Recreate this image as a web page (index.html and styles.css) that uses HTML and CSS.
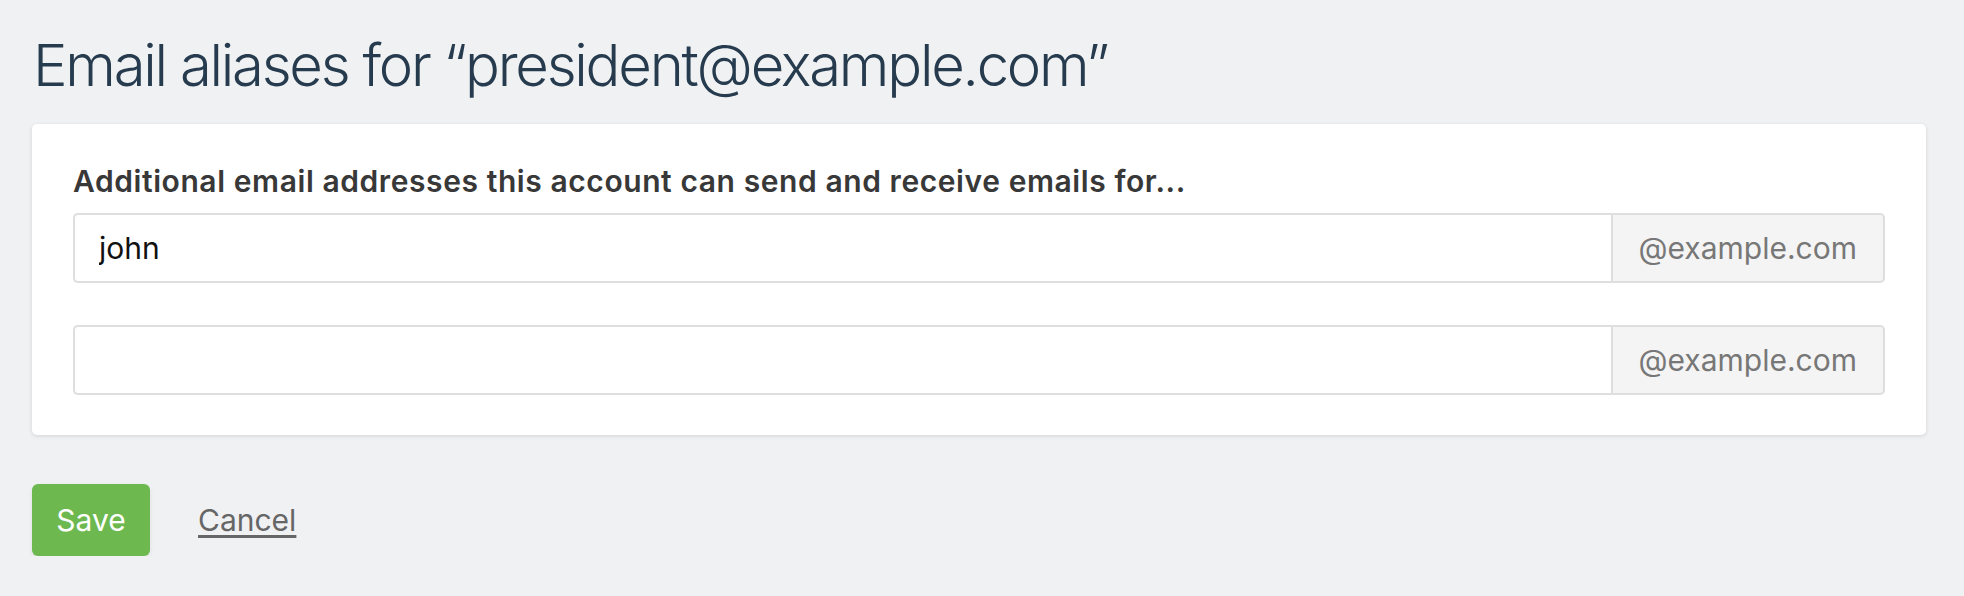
FILE: index.html
```html
<!DOCTYPE html>
<html lang="en">
<head>
<meta charset="utf-8">
<title>Email aliases</title>
<link rel="stylesheet" href="styles.css">
</head>
<body>
<main class="page">
  <h1 class="title">Email aliases for “president@example.com”</h1>
  <section class="card">
    <label class="label">Additional email addresses this account can send and receive emails for...</label>
    <div class="fields">
      <div class="input-group">
        <input class="input" type="text" value="john">
        <span class="addon">@example.com</span>
      </div>
      <div class="input-group">
        <input class="input" type="text" value="">
        <span class="addon">@example.com</span>
      </div>
    </div>
  </section>
  <div class="actions">
    <button class="btn-save" type="button">Save</button>
    <a class="link-cancel" href="#">Cancel</a>
  </div>
</main>
</body>
</html>
```

FILE: styles.css
```css
* { box-sizing: border-box; }
html, body { margin: 0; padding: 0; }
body {
  background: #f0f1f3;
  font-family: Inter, "Noto Sans", "Liberation Sans", sans-serif;
  color: #333;
}
.page {
  padding: 30px 38px 0 32px;
}
.title {
  margin: 0 0 24px 1px;
  font-size: 58px;
  line-height: 70px;
  font-weight: 300;
  color: #263b4e;
  letter-spacing: -2.25px;
}
.card {
  background: #fff;
  border-radius: 5px;
  box-shadow: 0 1px 4px rgba(0, 0, 0, 0.12);
  padding: 39px 41px 40px 41px;
}
.label {
  display: block;
  font-size: 30px;
  line-height: 36px;
  font-weight: 600;
  color: #383838;
  letter-spacing: 0.58px;
  margin-bottom: 14px;
}
.fields {
  display: flex;
  flex-direction: column;
  gap: 42px;
}
.input-group {
  display: flex;
  height: 70px;
}
.input {
  flex: 1;
  min-width: 0;
  border: 2px solid #dedede;
  border-right: none;
  border-radius: 5px 0 0 5px;
  padding: 0 24px;
  font-family: inherit;
  font-size: 30px;
  color: #111;
  background: #fff;
  outline: none;
}
.addon {
  display: flex;
  align-items: center;
  padding: 0 26px;
  border: 2px solid #dedede;
  border-radius: 0 5px 5px 0;
  background: #f4f4f4;
  color: #777;
  font-size: 30px;
}
.actions {
  display: flex;
  align-items: center;
  gap: 48px;
  margin-top: 49px;
}
.btn-save {
  width: 118px;
  height: 72px;
  border: none;
  border-radius: 6px;
  background: #6db84f;
  color: #fff;
  font-family: inherit;
  font-size: 30px;
  box-shadow: 0 2px 4px rgba(0, 0, 0, 0.08);
  padding: 0;
}
.link-cancel {
  color: #666;
  font-size: 30px;
  text-decoration: underline;
  text-underline-offset: 4px;
}
```
